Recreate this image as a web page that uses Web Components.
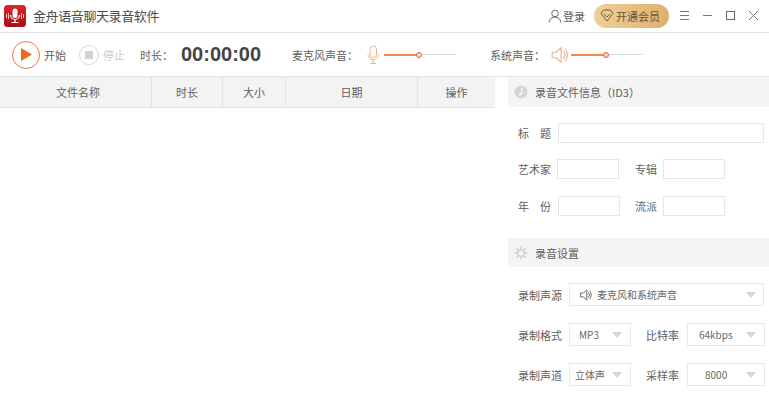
<!DOCTYPE html>
<html lang="zh"><head><meta charset="utf-8"><title>金舟语音聊天录音软件</title>
<style>html,body{margin:0;padding:0;background:#fff;overflow:hidden}body{width:769px;height:400px;font:11px "Noto Sans CJK SC","Liberation Sans",sans-serif;color:#606060}</style>
</head><body>
<rec-app></rec-app>
<script>
const FONT='"Noto Sans CJK SC","Liberation Sans",sans-serif';
const speaker=(c,s)=>`<svg width="${s}" height="${s}" viewBox="0 0 18 18" fill="none" stroke="${c}" stroke-width="1"><path d="M2 6.5h3.5L10 2.5v13l-4.5-4H2z" stroke-linejoin="round"/><path d="M12 5.5q3 3.500 0 7M13.500 3.500q4.500 5.500 0 11"/></svg>`;
class TitleBar extends HTMLElement{constructor(){super();this.attachShadow({mode:'open'}).innerHTML=`<style>
:host{display:flex;align-items:center;height:31px;padding-bottom:1px;border-bottom:1px solid #e3e3e3;padding-left:4px;font-family:${FONT};color:#444}
.logo{width:22px;height:22px;margin-right:7px;flex:none}
.t{font-size:13px;letter-spacing:-.4px;color:#4a4a4a}
.sp{flex:1}
.login{display:flex;align-items:center;font-size:11px;color:#606060;margin-right:9px;gap:1px}
.vip{display:flex;align-items:center;width:75px;height:24px;border-radius:12px;background:linear-gradient(90deg,#efcf9b,#deb06c);font-size:11px;color:#6d5537;box-sizing:border-box;padding-left:6px;gap:2px;margin-right:8px}
.b{display:flex;width:15px;justify-content:center;margin-right:8px}
</style>
<svg class="logo" viewBox="0 0 22 22"><defs><linearGradient id="g" x1="0" y1="0" x2="0" y2="1"><stop offset="0" stop-color="#e0252a"/><stop offset="1" stop-color="#a80f14"/></linearGradient></defs><rect width="22" height="22" rx="3.500" fill="url(#g)"/><rect x="8.500" y="3.500" width="5" height="9.500" rx="2.500" fill="#fff"/><path d="M6.500 10a4.500 4.500 0 0 0 9 0M11 14.500v2.500M7.500 17.500h7" fill="none" stroke="#fff" stroke-width="1.200"/><path d="M2.500 9v4M4.500 8v6M17.500 8v6M19.500 9v4" stroke="#f6c9c9" stroke-width="1"/></svg>
<span class="t">金舟语音聊天录音软件</span><span class="sp"></span>
<span class="login"><svg width="14" height="14" viewBox="0 0 14 14" fill="none" stroke="#666"><circle cx="7" cy="4.500" r="3.300"/><path d="M1 13.500c.5-3.500 3-5.500 6-5.500s5.500 2 6 5.500"/></svg>登录</span>
<span class="vip"><svg width="14" height="13" viewBox="0 0 14 13" fill="none" stroke="#7a5c36"><path d="M3.500 1h7L13 4.500 7 12 1 4.500z" stroke-linejoin="round"/><path d="M4 5l3 3 3-3"/></svg>开通会员</span>
<span class="b"><svg width="11" height="11" viewBox="0 0 11 11" stroke="#777"><path d="M1 1.500h9M1 5.500h9M1 9.500h9"/></svg></span>
<span class="b"><svg width="11" height="11" viewBox="0 0 11 11" stroke="#777"><path d="M1 5.500h9"/></svg></span>
<span class="b"><svg width="11" height="11" viewBox="0 0 11 11" fill="none" stroke="#666"><rect x="1.500" y="1.500" width="8" height="8"/></svg></span>
<span class="b"><svg width="11" height="11" viewBox="0 0 11 11" stroke="#777"><path d="M1 1l9 9M10 1l-9 9"/></svg></span>`}}
class VolSlider extends HTMLElement{constructor(){super();this.attachShadow({mode:'open'}).innerHTML=`<style>
:host{display:block;position:relative;width:72px;height:8px}
.l{position:absolute;left:0;right:0;top:3px;height:1px;background:#ddd}
.f{position:absolute;left:0;top:3px;height:2px;width:33px;background:#ec8b4a}
.k{position:absolute;left:32px;top:1px;width:6px;height:6px;box-sizing:border-box;border:1.500px solid #d9653a;border-radius:50%;background:#f7ddc8}
</style><div class="l"></div><div class="f"></div><div class="k"></div>`}}
class ToolBar extends HTMLElement{constructor(){super();this.attachShadow({mode:'open'}).innerHTML=`<style>
:host{display:flex;align-items:center;height:43px;padding-left:12px;border-bottom:1px solid #e6e6e6;font-family:${FONT};font-size:11px;color:#606060}
.rnd{width:28px;height:28px;box-sizing:border-box;border:1.500px solid #ee7a3c;border-radius:50%;display:flex;align-items:center;justify-content:center;flex:none}
.stop{width:20px;height:20px;border:1.500px solid #d8d8d8;margin-left:13px}
.stop i{width:8px;height:8px;background:#d0d0d0}
.dis{color:#c8c8c8;margin-left:4px}
.time{font:bold 20px "Liberation Sans",sans-serif;color:#444;margin-left:8px;width:111px}
</style>
<span class="rnd"><svg width="13" height="15" viewBox="0 0 13 15"><path d="M1 1l11 6.500L1 14z" fill="#ee6a22"/></svg></span>
<span style="margin-left:4px">开始</span>
<span class="rnd stop"><i></i></span><span class="dis">停止</span>
<span style="margin-left:15px">时长：</span><span class="time">00:00:00</span>
<span>麦克风声音：</span>
<svg style="margin-left:8px" width="14" height="20" viewBox="0 0 14 20" fill="none" stroke="#eeb288"><rect x="4" y="1" width="6.500" height="11.500" rx="3.200"/><path d="M2 9.500a5.200 5.200 0 0 0 10.400 0M7.200 15v3M4.500 18.500h5.500"/></svg>
<vol-slider style="margin-left:4px"></vol-slider>
<span style="margin-left:34px">系统声音：</span>
<span style="margin-left:5px;display:flex">${speaker('#eeb288',20)}</span>
<vol-slider style="margin-left:1px"></vol-slider>`}}
class FileTable extends HTMLElement{constructor(){super();const cols=[['文件名称',152,5],['时长',71,0],['大小',63,0],['日期',132,0],['操作',77,0]];this.attachShadow({mode:'open'}).innerHTML=`<style>
:host{display:block;width:495px;font-family:${FONT};font-size:11px;color:#606060}
.h{display:flex;height:30px;background:#f3f3f3;border-bottom:1px solid #e4e4e4}
.c{display:flex;align-items:center;justify-content:center;box-sizing:border-box;border-right:1px solid #e2e2e2}
.c:last-child{border-right:0}
</style><div class="h">${cols.map(c=>`<div class="c" style="width:${c[1]}px;padding-left:${c[2]}px">${c[0]}</div>`).join('')}</div>`}}
class SecHead extends HTMLElement{constructor(){super();this.attachShadow({mode:'open'}).innerHTML=`<style>
:host{display:flex;align-items:center;height:29px;background:#f4f4f4;padding-left:6px;gap:7px;font-size:11px;color:#606060;font-family:${FONT}}
</style><slot name="i"></slot><slot></slot>`}}
class TextBox extends HTMLElement{constructor(){super();this.attachShadow({mode:'open'}).innerHTML=`<style>
:host{display:block;box-sizing:border-box;height:20px;width:var(--w,62px);border:1px solid #e6e6e6;background:#fff}
</style>`}}
class DropBox extends HTMLElement{constructor(){super();this.attachShadow({mode:'open'}).innerHTML=`<style>
:host{display:flex;align-items:center;box-sizing:border-box;height:23px;width:var(--w,62px);border:1px solid #e8e8e8;background:#fff;padding-left:var(--p,9px);font:10px ${FONT};color:#666}
.x{flex:1;white-space:nowrap;display:flex;align-items:center}
i{width:0;height:0;border:5.500px solid transparent;border-top:6px solid #d4d4d4;border-bottom:0;margin-right:var(--a,8px)}
</style><span class="x"><slot></slot></span><i></i>`}}
class SidePanel extends HTMLElement{constructor(){super();this.attachShadow({mode:'open'}).innerHTML=`<style>
:host{display:block;width:261px;margin-left:13px;font-family:${FONT};font-size:11px;color:#606060}
.r{display:flex;align-items:center;padding-left:10px;white-space:nowrap}
.lab{width:39px;flex:none}.j{display:flex;justify-content:space-between;width:33px;margin-right:7px}
.lab2{width:51px;flex:none}
</style>
<sec-head style="height:30px"><svg slot="i" width="14" height="14" viewBox="0 0 14 14"><circle cx="7" cy="7" r="6.500" fill="#d4d4d4"/><path d="M8 3v5.500" stroke="#f4f4f4" stroke-width="1.300"/><circle cx="6.500" cy="9" r="1.600" fill="#f4f4f4"/></svg>录音文件信息（ID3）</sec-head>
<div class="r" style="margin-top:16px"><span class="j"><span>标</span><span>题</span></span><text-box style="--w:206px"></text-box></div>
<div class="r" style="margin-top:16px"><span class="lab">艺术家</span><text-box></text-box><span style="margin-left:16px;width:28px">专辑</span><text-box></text-box></div>
<div class="r" style="margin-top:17px"><span class="j"><span>年</span><span>份</span></span><text-box></text-box><span style="margin-left:15px;width:28px">流派</span><text-box></text-box></div>
<sec-head style="margin-top:22px"><svg slot="i" width="14" height="14" viewBox="0 0 14 14" fill="none" stroke="#d2d2d2" stroke-width="1.800"><circle cx="7" cy="7" r="3.400"/><path stroke-width="1.600" d="M7 .5v2.500M7 11v2.500M.5 7H3M11 7h2.500M2.400 2.400l1.800 1.800M9.800 9.800l1.800 1.800M11.600 2.400L9.800 4.200M4.200 9.800l-1.800 1.800"/></svg>录音设置</sec-head>
<div class="r" style="margin-top:16px"><span class="lab2">录制声源</span><drop-box style="--w:195px;--a:7px"><span style="display:flex;margin-right:4px">${speaker('#444',14)}</span>麦克风和系统声音</drop-box></div>
<div class="r" style="margin-top:17px"><span class="lab2">录制格式</span><drop-box>MP3</drop-box><span style="margin-left:15px;width:41px">比特率</span><drop-box style="--w:78px;--p:11px">64kbps</drop-box></div>
<div class="r" style="margin-top:17px"><span class="lab2">录制声道</span><drop-box style="--p:5px">立体声</drop-box><span style="margin-left:15px;width:41px">采样率</span><drop-box style="--w:78px;--p:17px">8000</drop-box></div>`}}
class RecApp extends HTMLElement{constructor(){super();this.attachShadow({mode:'open'}).innerHTML=`<style>
:host{display:block;width:769px;height:400px;overflow:hidden;background:#fff}
.m{display:flex}
</style><title-bar></title-bar><tool-bar></tool-bar><div class="m"><file-table></file-table><side-panel></side-panel></div>`}}
customElements.define('title-bar',TitleBar);customElements.define('vol-slider',VolSlider);customElements.define('tool-bar',ToolBar);customElements.define('file-table',FileTable);customElements.define('sec-head',SecHead);customElements.define('text-box',TextBox);customElements.define('drop-box',DropBox);customElements.define('side-panel',SidePanel);customElements.define('rec-app',RecApp);
</script></body></html>
